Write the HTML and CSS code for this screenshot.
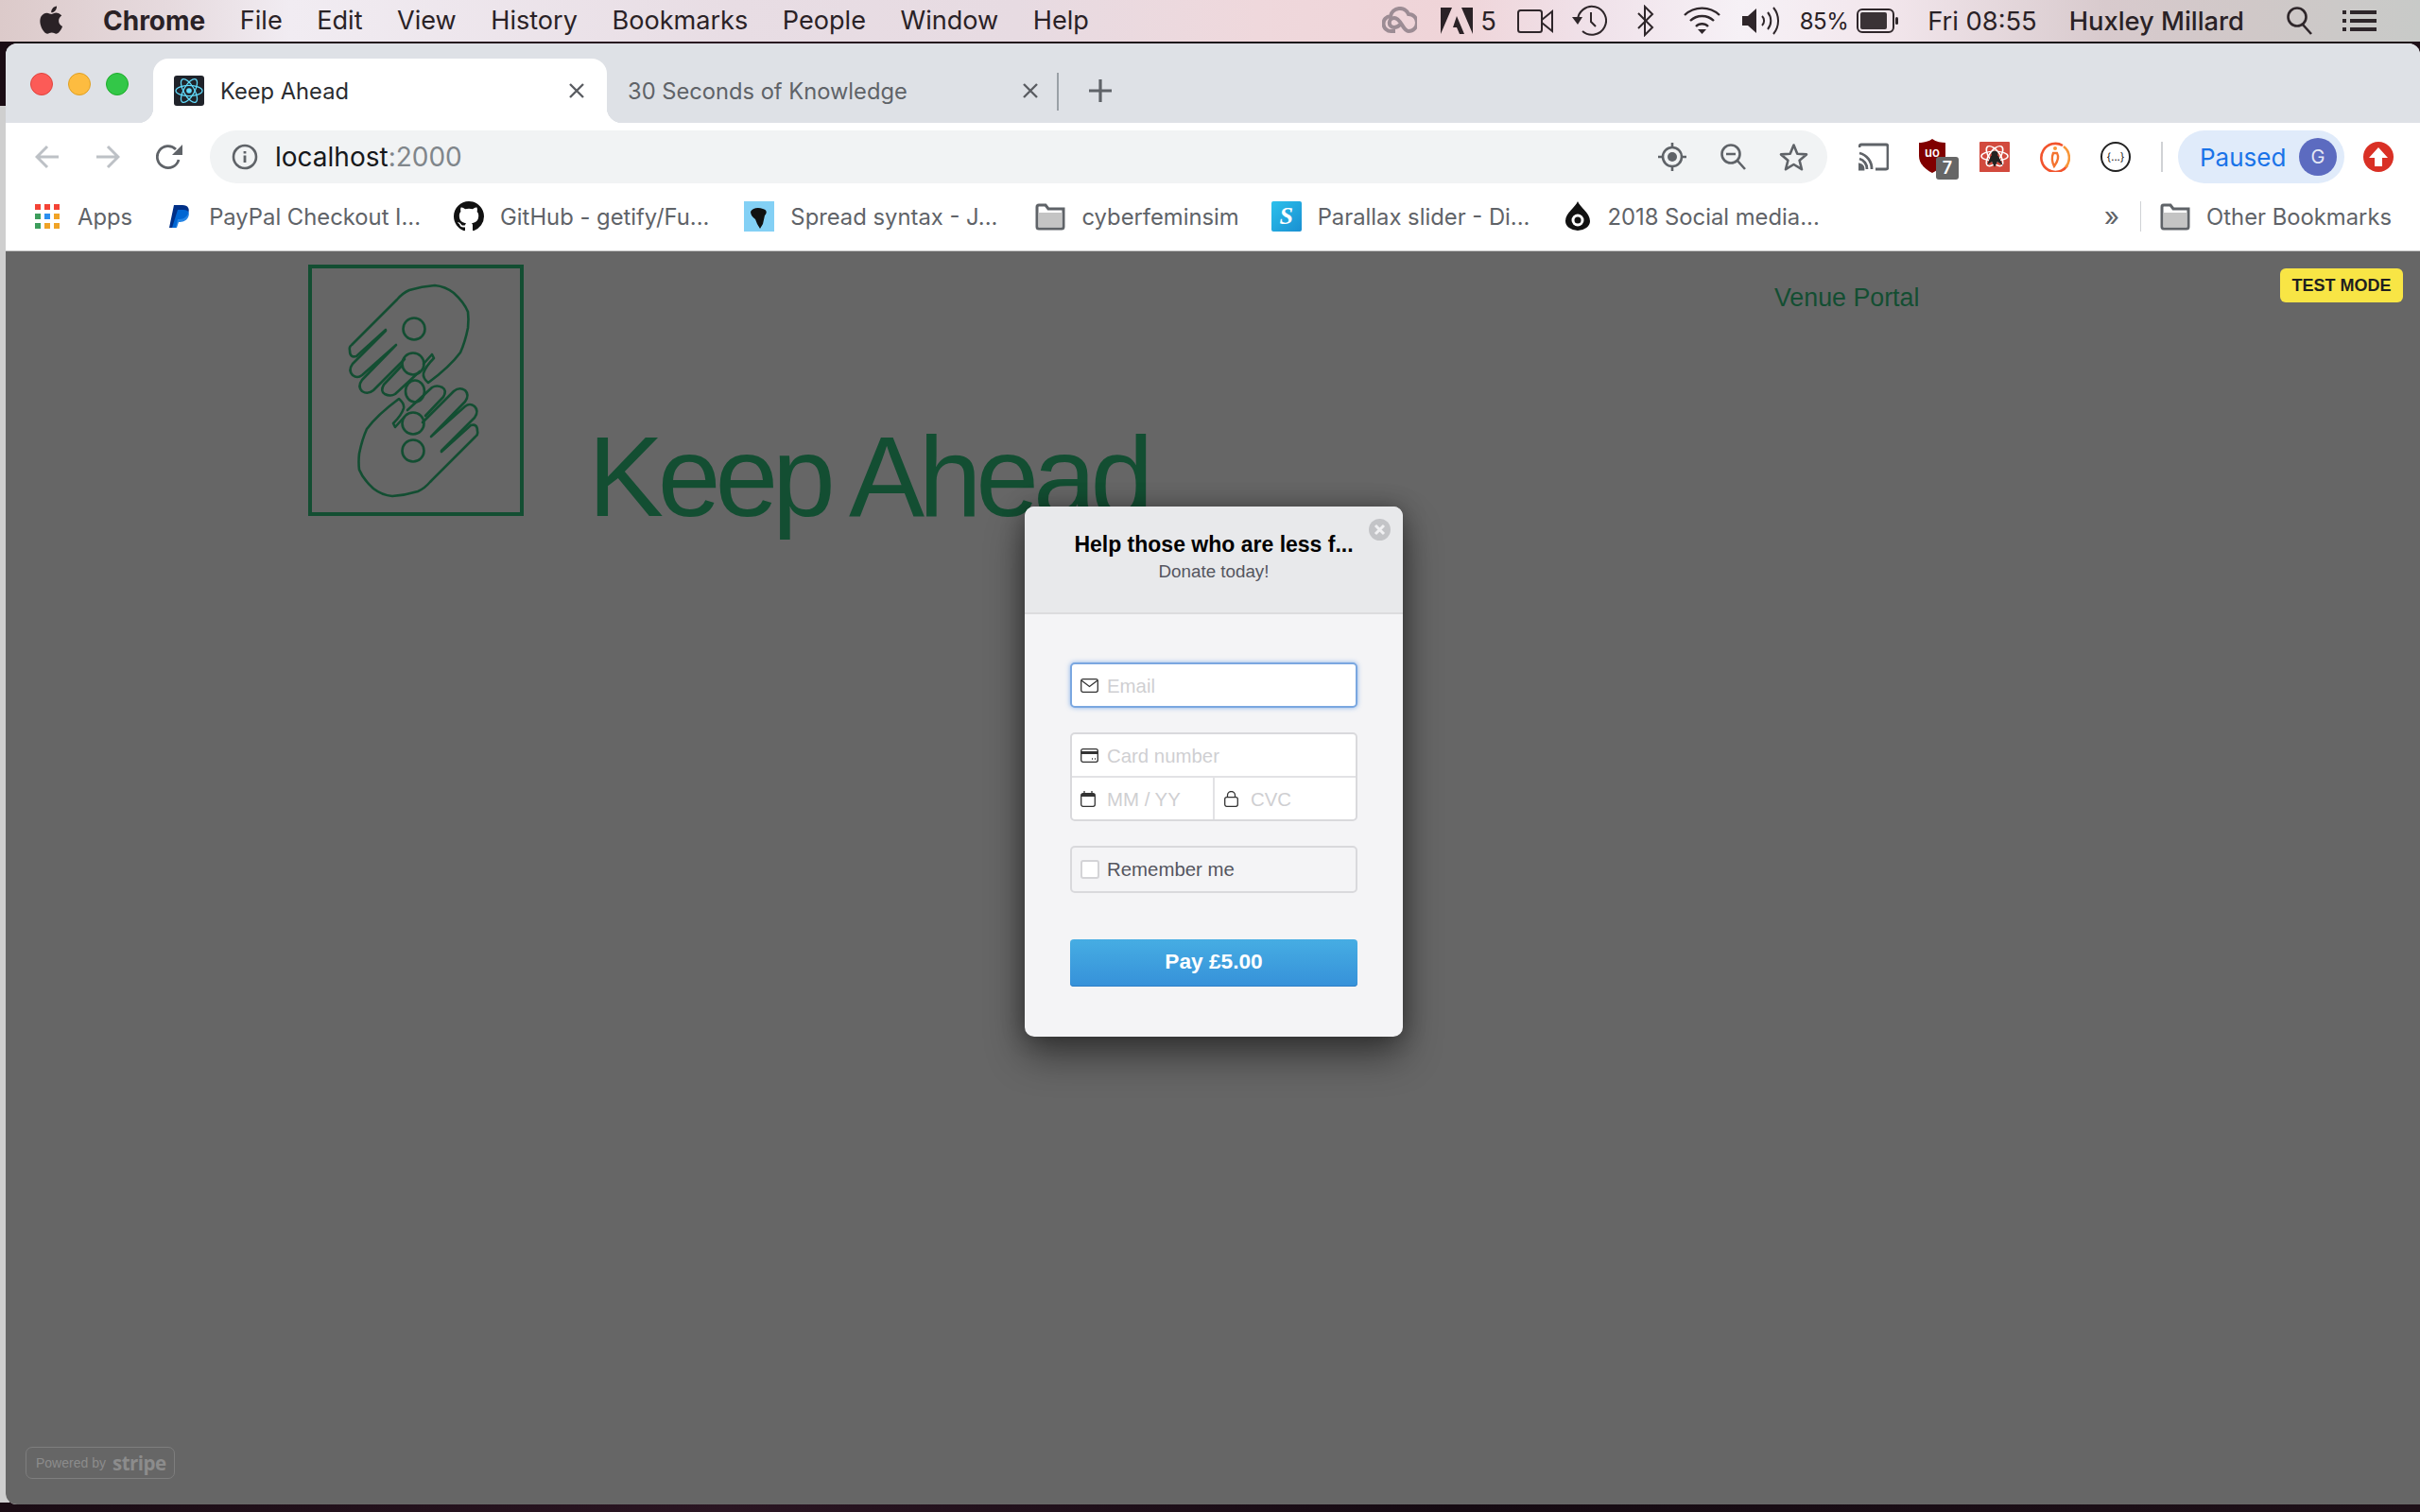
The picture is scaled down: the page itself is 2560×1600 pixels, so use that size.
FILE: index.html
```html
<!DOCTYPE html>
<html lang="en">
<head>
    <meta charset="UTF-8">
    <title>Keep Ahead</title>
    <link rel="stylesheet" href="styles.css">
</head>
<body>
    <svg class="defs" width="0" height="0">
        <defs>
            <g id="folder-icon">
                <path d="M2 6V27a2 2 0 0 0 2 2H28a2 2 0 0 0 2-2V8H14L11 4H4A2 2 0 0 0 2 6Z" fill="#fff" stroke="#5f6368" stroke-width="3"/>
                <path d="M3.5 12H28.5V27.5H3.5Z" fill="#c4c4c4"/>
            </g>
            <g id="hand" fill="none" stroke="#134e32" stroke-width="2.6" stroke-linejoin="round" stroke-linecap="round">
                <path d="M82 69L51 97Q44 99 44 91Q43 87 46 85L94 37Q100 30 107 27Q120 23 134 22Q145 23 154 30Q165 40 169 50Q170 58 169 67Q166 82 161 93Q150 108 127 125Q121 120 122 115Q124 108 133 99L131 95L122 105"/>
                <path d="M82 70L47 105Q42 112 47 117Q52 121 57 117L93 85L57 122Q52 129 57 134Q63 138 69 133L102 100M99 107L80 127Q76 134 81 137Q87 140 92 137L118 113"/>
            </g>
        </defs>
    </svg>

    <div class="back-window"></div>

    <header class="menubar">
        <svg class="apple" viewBox="0 0 24 24"><path d="M17.05 12.04c-.03-2.6 2.12-3.85 2.22-3.91-1.21-1.77-3.09-2.01-3.76-2.04-1.6-.16-3.12.94-3.93.94-.81 0-2.06-.92-3.39-.89-1.74.03-3.35 1.01-4.25 2.57-1.81 3.14-.46 7.8 1.3 10.35.86 1.25 1.89 2.65 3.24 2.6 1.3-.05 1.79-.84 3.36-.84 1.57 0 2.01.84 3.38.81 1.4-.02 2.28-1.27 3.14-2.53.99-1.45 1.4-2.86 1.42-2.93-.03-.01-2.72-1.04-2.75-4.13zM14.47 4.4c.72-.87 1.2-2.08 1.07-3.28-1.03.04-2.28.69-3.02 1.55-.66.77-1.24 2-1.09 3.18 1.15.09 2.32-.58 3.04-1.45z"/></svg>
        <nav class="menus">
            <span class="app-name">Chrome</span>
            <span>File</span>
            <span>Edit</span>
            <span>View</span>
            <span>History</span>
            <span>Bookmarks</span>
            <span>People</span>
            <span>Window</span>
            <span>Help</span>
        </nav>
        <div class="status">
            <svg class="st-cc" width="37" height="30" viewBox="0 0 37 30" fill="none" stroke="#9c8c94" stroke-width="4"><path d="M14 26H10A8 8 0 0 1 9 10A10 10 0 0 1 28 8A9 9 0 0 1 28 26C22 26 20 12 13 12C6 12 6 22 13 22C17 22 19 19 21 17"/></svg>
            <svg class="st-adobe" width="34" height="30" viewBox="0 0 34 30" fill="#2a2226"><path d="M0 1H12L0 29ZM22 1H34V29ZM17 10L25 29H20L17 22H13Z"/></svg>
            <span class="st-five">5</span>
            <svg class="st-video" width="39" height="28" viewBox="0 0 39 28" fill="none" stroke="#2e262a" stroke-width="2"><rect x="1" y="3" width="25" height="23" rx="2.5"/><path d="M26 13L37 4V25L26 16"/></svg>
            <svg class="st-clock" width="37" height="34" viewBox="0 0 37 34" fill="none" stroke="#2e262a" stroke-width="2"><path d="M6 17A15 15 0 1 1 11 28"/><path d="M20 8V18L25 23"/><path d="M0 13H11L6 21Z" fill="#2e262a" stroke="none"/></svg>
            <svg class="st-bt" width="20" height="34" viewBox="0 0 20 34" fill="none" stroke="#2e262a" stroke-width="2"><path d="M2 9L17 24L9 32V2L17 10L2 25"/></svg>
            <svg class="st-wifi" width="41" height="30" viewBox="0 0 41 30" fill="none" stroke="#2e262a" stroke-width="2.4"><path d="M2 9A27 27 0 0 1 39 9M8 15A18 18 0 0 1 33 15M14 21A9 9 0 0 1 27 21"/><path d="M16 24H25L20.5 29Z" fill="#2e262a" stroke="none"/></svg>
            <svg class="st-vol" width="41" height="34" viewBox="0 0 41 34" fill="none" stroke="#2e262a" stroke-width="2"><path d="M0 12H6L15 4V30L6 22H0Z" fill="#2e262a" stroke="none"/><path d="M21 12A7 7 0 0 1 21 22M27 8A14 14 0 0 1 27 26M33 3A22 22 0 0 1 33 31"/></svg>
            <span class="st-batt-text">85%</span>
            <svg class="st-batt" width="44" height="26" viewBox="0 0 44 26" fill="none"><rect x="1" y="1" width="38" height="24" rx="5" stroke="#2e262a" stroke-width="2"/><rect x="4" y="4" width="28" height="18" rx="2" fill="#3a3236"/><rect x="41" y="9" width="3" height="8" rx="1.5" fill="#2e262a"/></svg>
            <span class="st-time">Fri 08:55</span>
            <span class="st-user">Huxley Millard</span>
            <svg class="st-search" width="28" height="30" viewBox="0 0 28 30" fill="none" stroke="#2e262a" stroke-width="2.6"><circle cx="11" cy="11" r="9.5"/><path d="M17 19L26 29"/></svg>
            <svg class="st-list" width="36" height="24" viewBox="0 0 36 24" fill="#2e262a"><rect y="1" width="4" height="4"/><rect x="8" y="1" width="28" height="4"/><rect y="10" width="4" height="4"/><rect x="8" y="10" width="28" height="4"/><rect y="19" width="4" height="4"/><rect x="8" y="19" width="28" height="4"/></svg>
        </div>
    </header>

    <div class="window">
        <div class="tabstrip">
            <div class="lights">
                <span class="light red"></span>
                <span class="light yellow"></span>
                <span class="light green"></span>
            </div>
            <div class="tab active">
                <svg class="favicon" viewBox="0 0 32 32"><rect width="32" height="32" rx="3" fill="#20232a"/><g fill="none" stroke="#61dafb" stroke-width="1.3"><ellipse cx="16" cy="16" rx="14" ry="5.6"/><ellipse cx="16" cy="16" rx="14" ry="5.6" transform="rotate(60 16 16)"/><ellipse cx="16" cy="16" rx="14" ry="5.6" transform="rotate(120 16 16)"/></g><circle cx="16" cy="16" r="2.8" fill="#61dafb"/></svg>
                <span class="tab-title">Keep Ahead</span>
                <svg class="tab-close" viewBox="0 0 16 16"><path d="M1 1L15 15M15 1L1 15"/></svg>
            </div>
            <div class="tab">
                <span class="tab-title">30 Seconds of Knowledge</span>
                <svg class="tab-close" viewBox="0 0 16 16"><path d="M1 1L15 15M15 1L1 15"/></svg>
            </div>
            <span class="tab-sep"></span>
            <svg class="new-tab" viewBox="0 0 26 26"><path d="M13 1V25M1 13H25"/></svg>
        </div>

        <div class="toolbar">
            <svg class="nav-btn" viewBox="0 0 26 26"><path d="M25 13H2M13 2L2 13L13 24"/></svg>
            <svg class="nav-btn forward" viewBox="0 0 26 26"><path d="M1 13H24M13 2L24 13L13 24"/></svg>
            <svg class="reload" viewBox="0 0 28 28" fill="none"><path d="M24 17A11.5 11.5 0 1 1 21 6" stroke="#5f6368" stroke-width="2.8"/><path d="M28 1V12H17Z" fill="#5f6368"/></svg>
            <div class="omnibox">
                <svg class="info" viewBox="0 0 28 28" fill="none"><circle cx="14" cy="14" r="12" stroke="#5f6368" stroke-width="2.6"/><path d="M14 12.5V20M14 8V10.5" stroke="#5f6368" stroke-width="2.8"/></svg>
                <span class="url">localhost<span class="url-port">:2000</span></span>
                <div class="omni-icons">
                    <svg width="30" height="30" viewBox="0 0 30 30" fill="none" stroke="#5f6368" stroke-width="2.6"><circle cx="15" cy="15" r="10"/><circle cx="15" cy="15" r="5" fill="#5f6368" stroke="none"/><path d="M15 0V5M15 25V30M0 15H5M25 15H30"/></svg>
                    <svg width="28" height="30" viewBox="0 0 28 30" fill="none" stroke="#5f6368" stroke-width="2.6"><circle cx="12" cy="12" r="9.5"/><path d="M7 12H17M18 18L27 28"/></svg>
                    <svg width="31" height="30" viewBox="0 0 31 30" fill="none" stroke="#5f6368" stroke-width="2.6"><path d="M15.5 2.5L19.3 11.7L29 12.4L21.6 18.7L24 28.2L15.5 23L7 28.2L9.4 18.7L2 12.4L11.7 11.7Z" stroke-linejoin="round"/></svg>
                </div>
            </div>
            <div class="extensions">
                <svg width="32" height="32" viewBox="0 0 32 32" fill="none" stroke="#5f6368" stroke-width="2.8"><path d="M1 6V5A2 2 0 0 1 3 3H29A2 2 0 0 1 31 5V27A2 2 0 0 1 29 29H18"/><path d="M1 12A17 17 0 0 1 14 29M1 18A11 11 0 0 1 9 29"/><path d="M1 24A5 5 0 0 1 5 29H1Z" fill="#5f6368"/></svg>
                <div class="ext-ublock">
                    <svg width="28" height="36" viewBox="0 0 28 36"><path d="M14 0C18 3 24 4 28 4V18C28 27 20 33 14 36C8 33 0 27 0 18V4C4 4 10 3 14 0Z" fill="#800000"/></svg>
                    <span class="ublock-mark">uo</span>
                    <span class="badge">7</span>
                </div>
                <svg width="32" height="32" viewBox="0 0 32 38" preserveAspectRatio="none"><rect width="32" height="38" rx="1" fill="#d24a3e"/><g fill="none" stroke="#fff" stroke-width="1.6"><ellipse cx="16" cy="18" rx="14" ry="6"/><ellipse cx="16" cy="18" rx="14" ry="6" transform="rotate(60 16 18)"/><ellipse cx="16" cy="18" rx="14" ry="6" transform="rotate(120 16 18)"/></g><path d="M16 13L20 18L25 30L19 25L16 32L13 25L8 29L12 18Z" fill="#222"/><circle cx="16" cy="15" r="3.4" fill="#222"/></svg>
                <svg width="32" height="32" viewBox="0 0 32 32" fill="none"><path d="M24 4A15 15 0 1 0 29 25" stroke="#f2542d" stroke-width="2.6"/><path d="M25 5A15 15 0 0 1 27 27" stroke="#f89638" stroke-width="2.6"/><circle cx="16" cy="7" r="2" fill="#f89638"/><path d="M14 12H18C21 17 18 22 15 26C13 22 12 17 14 12Z" stroke="#f4732f" stroke-width="2.4"/></svg>
                <div class="ext-json"><span>{...}</span></div>
            </div>
            <span class="tool-sep"></span>
            <div class="profile">
                <span class="paused">Paused</span>
                <span class="avatar">G</span>
            </div>
            <svg class="update" viewBox="0 0 32 32"><circle cx="16" cy="16" r="16" fill="#d93025"/><path d="M16 6L26 17H20V26H12V17H6Z" fill="#fff"/></svg>
        </div>

        <div class="bookmarks">
            <a class="bm bm-apps">
                <svg class="bm-grid" width="26" height="26" viewBox="0 0 26 26"><rect width="6" height="6" fill="#f44336"/><rect x="10" width="6" height="6" fill="#f44336"/><rect x="20" width="6" height="6" fill="#f44336"/><rect y="10" width="6" height="6" fill="#3d9d5c"/><rect x="10" y="10" width="6" height="6" fill="#2b8fef"/><rect x="20" y="10" width="6" height="6" fill="#f0a326"/><rect y="20" width="6" height="6" fill="#3d9d5c"/><rect x="10" y="20" width="6" height="6" fill="#f0a326"/><rect x="20" y="20" width="6" height="6" fill="#f0a326"/></svg>
                <span>Apps</span>
            </a>
            <a class="bm bm-paypal">
                <svg width="22" height="24" viewBox="0 0 22 24"><path d="M5 0H14C20 0 22 4 20 9C18 14 14 15 9 15L7 24H0Z" fill="#003087"/><path d="M9 5H15C21 5 22 9 20 13C18 17 14 18 10 18L8 24H3Z" fill="#0070e0" opacity=".85"/></svg>
                <span>PayPal Checkout I...</span>
            </a>
            <a class="bm bm-github">
                <svg width="32" height="32" viewBox="0 0 16 16"><path fill="#111" d="M8 0C3.58 0 0 3.58 0 8c0 3.54 2.29 6.53 5.47 7.59.4.07.55-.17.55-.38 0-.19-.01-.82-.01-1.49-2.01.37-2.53-.49-2.69-.94-.09-.23-.48-.94-.82-1.13-.28-.15-.68-.52-.01-.53.63-.01 1.08.58 1.23.82.72 1.21 1.87.87 2.33.66.07-.52.28-.87.51-1.07-1.78-.2-3.64-.89-3.64-3.95 0-.87.31-1.59.82-2.15-.08-.2-.36-1.02.08-2.12 0 0 .67-.21 2.2.82.64-.18 1.32-.27 2-.27.68 0 1.36.09 2 .27 1.53-1.04 2.2-.82 2.2-.82.44 1.1.16 1.92.08 2.12.51.56.82 1.27.82 2.15 0 3.07-1.87 3.75-3.65 3.95.29.25.54.73.54 1.48 0 1.07-.01 1.93-.01 2.2 0 .21.15.46.55.38A8.013 8.013 0 0016 8c0-4.42-3.58-8-8-8z"/></svg>
                <span>GitHub - getify/Fu...</span>
            </a>
            <a class="bm bm-spread">
                <svg width="32" height="32" viewBox="0 0 32 32"><rect width="32" height="32" fill="#83d0f5"/><path d="M7 11C9 7 15 6 20 8C24 9 25 12 22 15L20 24L17 29L14 24L12 19C9 17 7 14 7 11Z" fill="#111"/></svg>
                <span>Spread syntax - J...</span>
            </a>
            <a class="bm bm-cyber">
                <svg width="32" height="32" viewBox="0 0 32 32"><use href="#folder-icon"/></svg>
                <span>cyberfeminsim</span>
            </a>
            <a class="bm bm-parallax">
                <span class="parallax-icon">S</span>
                <span>Parallax slider - Di...</span>
            </a>
            <a class="bm bm-social">
                <svg width="28" height="32" viewBox="0 0 28 32"><path d="M14 0C16 6 27 12 27 21A13 10 0 0 1 1 21C1 12 12 6 14 0Z" fill="#111"/><circle cx="14" cy="20" r="6.5" fill="#fff"/><circle cx="14" cy="20" r="3.5" fill="#111"/></svg>
                <span>2018 Social media...</span>
            </a>
            <span class="bm-more">»</span>
            <span class="bm-sep"></span>
            <a class="bm bm-other">
                <svg width="32" height="32" viewBox="0 0 32 32"><use href="#folder-icon"/></svg>
                <span>Other Bookmarks</span>
            </a>
        </div>

        <main class="page">
            <div class="site-head">
                <div class="logo">
                    <svg width="220" height="258" viewBox="4 4 220 258">
                        <use href="#hand"/>
                        <use href="#hand" transform="rotate(180 111.5 133.5)"/>
                        <g fill="none" stroke="#134e32" stroke-width="2.6">
                            <circle cx="112" cy="68" r="11.5"/>
                            <circle cx="111" cy="105" r="11.5"/>
                            <ellipse cx="113" cy="134" rx="10" ry="11.5"/>
                            <circle cx="111" cy="168" r="11.5"/>
                            <circle cx="111" cy="197" r="11.5"/>
                        </g>
                    </svg>
                </div>
                <h1 class="site-title">Keep Ahead</h1>
                <a class="venue-link">Venue Portal</a>
            </div>

            <span class="test-mode">TEST MODE</span>

            <div class="checkout">
                <div class="checkout-head">
                    <span class="close-btn">
                        <svg width="23" height="23" viewBox="0 0 23 23"><circle cx="11.5" cy="11.5" r="11.5" fill="#c3c4c7"/><path d="M7 7L16 16M16 7L7 16" stroke="#f0f0f2" stroke-width="3"/></svg>
                    </span>
                    <h2 class="checkout-title">Help those who are less f...</h2>
                    <p class="checkout-sub">Donate today!</p>
                </div>
                <form class="checkout-body">
                    <div class="field field-focus">
                        <svg class="field-icon" width="19" height="15" viewBox="0 0 19 15" fill="none" stroke="#333" stroke-width="1.3"><rect x=".7" y=".7" width="17.6" height="13.6" rx="2"/><path d="M1 2L9.5 8.5L18 2"/></svg>
                        <span class="placeholder">Email</span>
                    </div>
                    <div class="field-group">
                        <div class="field-row">
                            <svg class="field-icon" width="19" height="15" viewBox="0 0 19 15" fill="none" stroke="#333" stroke-width="1.3"><rect x=".7" y=".7" width="17.6" height="13.6" rx="2"/><rect x="1" y="3" width="17" height="3" fill="#333" stroke="none"/><path d="M12 11H13M15 11H16"/></svg>
                            <span class="placeholder">Card number</span>
                        </div>
                        <div class="field-split">
                            <div class="field-row">
                                <svg class="field-icon" width="16" height="17" viewBox="0 0 16 17" fill="none" stroke="#333" stroke-width="1.3"><rect x=".7" y="2.7" width="14.6" height="13.6" rx="2"/><rect x="1" y="3" width="14" height="3" fill="#333" stroke="none"/><path d="M4 0V3M12 0V3"/></svg>
                                <span class="placeholder">MM / YY</span>
                            </div>
                            <div class="field-row field-cvc">
                                <svg class="field-icon" width="15" height="17" viewBox="0 0 15 17" fill="none" stroke="#333" stroke-width="1.3"><rect x=".7" y="6.7" width="13.6" height="9.6" rx="2"/><path d="M3.5 7V4.5A4 4 0 0 1 11.5 4.5V7"/></svg>
                                <span class="placeholder">CVC</span>
                            </div>
                        </div>
                    </div>
                    <label class="remember">
                        <span class="checkbox"></span>
                        <span>Remember me</span>
                    </label>
                    <button class="pay-btn" type="button">Pay £5.00</button>
                </form>
            </div>

            <div class="powered">
                <span class="powered-by">Powered by</span>
                <span class="powered-stripe">stripe</span>
            </div>
        </main>
    </div>
</body>
</html>
```

FILE: styles.css
```css
* {
    box-sizing: border-box;
}
html, body {
    margin: 0;
    height: 100%;
}
body {
    width: 2560px;
    height: 1600px;
    overflow: hidden;
    display: flex;
    flex-direction: column;
    position: relative;
    background: linear-gradient(90deg, #1a0c14, #2a1522 30%, #150a12 60%, #1e1018);
    font-family: Inter, "Noto Sans", sans-serif;
}
.defs {
    position: absolute;
}
.back-window {
    position: absolute;
    left: 0;
    top: 112px;
    bottom: 10px;
    width: 10px;
    background: #cfcfcf;
}

/* menu bar */
.menubar {
    height: 44px;
    flex: none;
    display: flex;
    align-items: center;
    color: #2a2226;
    font-size: 27.3px;
    background: linear-gradient(90deg, #dccaca, #e6dade 7%, #f1ecf2 12%, #e8dde4 30%, #e7dbe2 42%, #efd8dc 52%, #efd4d8 60%, #f0e2ea 66%, #f6f1f6 72%, #f2e6ec 78%, #d8cacd 87%, #d0c8c8 93%, #c8cac8);
}
.apple {
    width: 34px;
    height: 36px;
    margin-left: 38px;
    fill: #2a2226;
}
.menus {
    display: flex;
    gap: 36.5px;
    margin-left: 37px;
    font-size: 27.1px;
}
.app-name {
    font-size: 28px;
    font-weight: 700;
}
.status {
    display: flex;
    align-items: center;
    position: absolute;
    right: 46px;
    top: 0;
    height: 44px;
}
.st-adobe { margin-left: 25px; }
.st-five { margin-left: 8px; }
.st-video { margin-left: 22px; }
.st-clock { margin-left: 19px; }
.st-bt { margin-left: 31px; }
.st-wifi { margin-left: 29px; }
.st-vol { margin-left: 22px; }
.st-batt-text { margin-left: 20px; font-size: 24px; letter-spacing: -0.5px; }
.st-batt { margin-left: 9px; }
.st-time { margin-left: 31px; }
.st-user { margin-left: 34px; font-weight: 500; }
.st-search { margin-left: 45px; }
.st-list { margin-left: 31px; }

/* browser window */
.window {
    flex: 1;
    margin: 2px 0 8px 6px;
    display: flex;
    flex-direction: column;
    border-radius: 12px 12px 0 12px;
    overflow: hidden;
    position: relative;
    background: #fff;
}
.tabstrip {
    height: 84px;
    flex: none;
    display: flex;
    align-items: flex-end;
    background: #dee1e6;
}
.lights {
    width: 156px;
    height: 84px;
    display: flex;
    gap: 16px;
    padding: 31px 0 0 26px;
}
.light {
    width: 24px;
    height: 24px;
    border-radius: 50%;
}
.red { background: #fc5b57; border: 1px solid #e0443e; }
.yellow { background: #fdbc40; border: 1px solid #dfa023; }
.green { background: #33c748; border: 1px solid #1dad2b; }
.tab {
    width: 480px;
    height: 68px;
    display: flex;
    align-items: center;
    padding: 0 24px 0 22px;
    color: #5f6368;
    font-size: 23.7px;
    position: relative;
    border-radius: 16px 16px 0 0;
}
.tab.active {
    background: #fff;
    color: #2a2c30;
}
.tab.active::before,
.tab.active::after {
    content: "";
    position: absolute;
    bottom: 0;
    width: 16px;
    height: 16px;
}
.tab.active::before {
    left: -16px;
    background: radial-gradient(circle at 0 0, transparent 16px, #fff 16.5px);
}
.tab.active::after {
    right: -16px;
    background: radial-gradient(circle at 100% 0, transparent 16px, #fff 16.5px);
}
.favicon {
    width: 32px;
    height: 32px;
    margin-right: 17px;
}
.tab-title {
    flex: 1;
    white-space: nowrap;
}
.tab-close {
    width: 16px;
    height: 16px;
    fill: none;
    stroke: #5a5d62;
    stroke-width: 2.4;
}
.tab-sep {
    width: 2px;
    height: 40px;
    margin: 0 0 13px -4px;
    background: #9aa0a6;
}
.new-tab {
    width: 26px;
    height: 26px;
    margin: 0 0 21px 31px;
    fill: none;
    stroke: #5f6368;
    stroke-width: 3.2;
}

/* toolbar */
.toolbar {
    height: 72px;
    flex: none;
    display: flex;
    align-items: center;
    padding: 0 28px 0 31px;
    background: #fff;
}
.nav-btn {
    width: 26px;
    height: 26px;
    fill: none;
    stroke: #bdc1c6;
    stroke-width: 3;
}
.forward {
    margin-left: 38px;
}
.reload {
    width: 28px;
    height: 28px;
    margin-left: 38px;
}
.omnibox {
    width: 1711px;
    height: 56px;
    margin-left: 29px;
    display: flex;
    align-items: center;
    padding: 0 20px 0 23px;
    border-radius: 28px;
    background: #f1f3f4;
}
.info {
    width: 28px;
    height: 28px;
}
.url {
    margin-left: 18px;
    font-size: 28px;
    color: #16181b;
}
.url-port {
    color: #80868b;
}
.omni-icons {
    margin-left: auto;
    display: flex;
    align-items: center;
    gap: 35px;
}
.extensions {
    display: flex;
    align-items: center;
    gap: 32px;
    margin-left: 33px;
}
.ext-ublock {
    width: 32px;
    height: 38px;
    position: relative;
}
.ublock-mark {
    position: absolute;
    left: 6px;
    top: 6px;
    color: #fff;
    font-size: 13px;
    font-weight: 600;
}
.badge {
    position: absolute;
    left: 18px;
    top: 19px;
    width: 24px;
    height: 24px;
    border-radius: 3px;
    background: #666;
    color: #fff;
    font-size: 18px;
    font-weight: 600;
    text-align: center;
    line-height: 24px;
}
.ext-json {
    width: 32px;
    height: 32px;
    border: 2px solid #222;
    border-radius: 50%;
    display: flex;
    align-items: center;
    justify-content: center;
    font-size: 11px;
    color: #111;
}
.tool-sep {
    width: 2px;
    height: 32px;
    margin-left: 32px;
    background: #d0d2d5;
}
.profile {
    width: 176px;
    height: 56px;
    margin-left: 16px;
    display: flex;
    align-items: center;
    padding: 0 8px 0 23px;
    border-radius: 28px;
    background: #e0ebfa;
}
.paused {
    flex: 1;
    font-size: 26px;
    color: #1a73e8;
}
.avatar {
    width: 40px;
    height: 40px;
    border-radius: 50%;
    background: #5c6bc0;
    color: #e6e8f5;
    font-size: 20px;
    text-align: center;
    line-height: 40px;
}
.update {
    width: 32px;
    height: 32px;
    margin-left: 20px;
}

/* bookmarks bar */
.bookmarks {
    height: 64px;
    flex: none;
    display: flex;
    align-items: center;
    padding: 0 0 9px 31px;
    border-bottom: 1px solid #c4c4c4;
    background: #fff;
    color: #5f6368;
    font-size: 23.8px;
    white-space: nowrap;
}
.bm {
    display: flex;
    align-items: center;
    gap: 17px;
    margin-right: 38px;
}
.bm-apps { gap: 16px; margin-right: 39px; }
.bm-grid {
    margin-right: 3px;
}
.bm-paypal { gap: 20px; margin-right: 35px; }
.bm-github { margin-right: 37px; }
.bm-spread { margin-right: 40px; }
.bm-cyber { margin-right: 34px; }
.bm-parallax { margin-right: 37px; }
.parallax-icon {
    width: 32px;
    height: 32px;
    border-radius: 2px;
    background: linear-gradient(135deg, #2bc1ec, #1a8fd1);
    color: #fff;
    font: italic 700 26px "Liberation Serif", serif;
    text-align: center;
    line-height: 32px;
}
.bm-more {
    margin-left: auto;
    font-size: 28px;
    line-height: 28px;
    color: #5f6368;
}
.bm-sep {
    width: 1px;
    height: 32px;
    margin: 0 20px 0 22px;
    background: #d0d2d5;
}
.bm-other {
    margin-right: 30px;
}

/* dimmed page */
.page {
    flex: 1;
    position: relative;
    background: #666;
    font-family: "Liberation Sans", Arial, sans-serif;
}
.site-head {
    display: flex;
    align-items: flex-start;
    padding: 14px 0 0 320px;
}
.logo {
    width: 228px;
    height: 266px;
    border: 4px solid #134e32;
    flex: none;
}
.site-title {
    margin: 156px 0 0 68px;
    font-size: 120px;
    line-height: 137px;
    font-weight: 400;
    letter-spacing: -6.2px;
    color: #134e32;
    white-space: nowrap;
}
.venue-link {
    margin: 20px 0 0 663px;
    font-size: 26.8px;
    color: #134e32;
}
.test-mode {
    position: absolute;
    top: 18px;
    right: 18px;
    width: 130px;
    height: 36px;
    border-radius: 6px;
    background: #f8e545;
    color: #1f1f1f;
    font-size: 18px;
    font-weight: 700;
    text-align: center;
    line-height: 36px;
    white-space: nowrap;
}

/* stripe checkout overlay */
.checkout {
    position: absolute;
    left: 1078px;
    top: 270px;
    width: 400px;
    height: 561px;
    border-radius: 10px;
    overflow: hidden;
    background: #f4f4f6;
    box-shadow: 0 20px 40px rgba(0, 0, 0, 0.45), 0 0 24px rgba(0, 0, 0, 0.3);
}
.checkout-head {
    height: 114px;
    position: relative;
    padding-top: 27px;
    background: #e8e9eb;
    border-bottom: 2px solid #dcdcde;
    text-align: center;
}
.close-btn {
    position: absolute;
    right: 13px;
    top: 13px;
    line-height: 0;
}
.checkout-title {
    margin: 0;
    font-size: 23px;
    line-height: 26px;
    font-weight: 700;
    color: #000;
}
.checkout-sub {
    margin: 5px 0 0;
    font-size: 18.8px;
    line-height: 22px;
    color: #55565f;
}
.checkout-body {
    display: flex;
    flex-direction: column;
    padding: 51px 48px 0 48px;
}
.field,
.field-row {
    height: 46px;
    display: flex;
    align-items: center;
    padding-left: 9px;
}
.field-icon {
    flex: none;
}
.field-focus {
    height: 48px;
    background: #fff;
    border: 2px solid #7aa7e0;
    border-radius: 5px;
    box-shadow: 0 0 5px rgba(90, 150, 230, 0.7);
}
.placeholder {
    position: absolute;
    margin: 3px 0 0 28px;
    font-size: 20.4px;
    color: #cfcfd2;
}
.field-group {
    height: 94px;
    margin-top: 26px;
    background: #fff;
    border: 2px solid #d9d9dc;
    border-radius: 5px;
}
.field-group > .field-row {
    border-bottom: 2px solid #e2e2e5;
}
.field-split {
    display: grid;
    grid-template-columns: 149px 1fr;
}
.field-split .field-row {
    height: 44px;
}
.field-cvc {
    padding-left: 10px;
    border-left: 2px solid #e2e2e5;
}
.field-cvc .placeholder {
    margin-left: 28px;
}
.remember {
    height: 50px;
    margin-top: 26px;
    display: flex;
    align-items: center;
    gap: 8px;
    padding-left: 9px;
    border: 2px solid #d9d9dc;
    border-radius: 5px;
    font-size: 20.4px;
    color: #55565f;
}
.checkbox {
    width: 20px;
    height: 20px;
    border: 2px solid #d4d4d7;
    border-radius: 3px;
    background: #fff;
}
.pay-btn {
    height: 50px;
    margin-top: 49px;
    padding-bottom: 4px;
    border: 0;
    border-radius: 4px;
    background: linear-gradient(#46ade3, #3691d9);
    box-shadow: inset 0 -1px 0 #2e7fc6;
    color: #fff;
    font: 700 22.7px "Liberation Sans", Arial, sans-serif;
}
.powered {
    position: absolute;
    left: 21px;
    bottom: 27px;
    width: 158px;
    height: 34px;
    display: flex;
    align-items: center;
    gap: 7px;
    padding-left: 10px;
    border: 1px solid #7e7e7e;
    border-radius: 7px;
    color: #8c8c8c;
}
.powered-by {
    font-size: 14px;
    white-space: nowrap;
}
.powered-stripe {
    font: 700 20.5px "Open Sans", sans-serif;
    line-height: 28px;
    letter-spacing: -0.5px;
}
```
